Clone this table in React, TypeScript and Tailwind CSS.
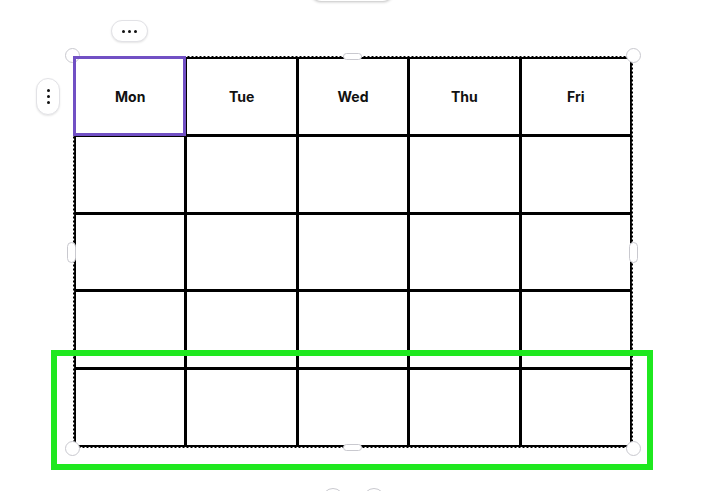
import React from "react";

const days = ["Mon", "Tue", "Wed", "Thu", "Fri"];

function Handle({ className }: { className: string }) {
  return <div className={"absolute z-20 bg-white border border-[#c9c9cf] " + className} />;
}

function Dots({ vertical }: { vertical?: boolean }) {
  return (
    <div className={"flex items-center justify-center gap-[3px] " + (vertical ? "flex-col" : "flex-row")}>
      <span className="w-[3px] h-[3px] rounded-full bg-[#111]" />
      <span className="w-[3px] h-[3px] rounded-full bg-[#111]" />
      <span className="w-[3px] h-[3px] rounded-full bg-[#111]" />
    </div>
  );
}

export default function App() {
  const cells = Array.from({ length: 20 });
  return (
    <div
      className="relative w-[703px] h-[491px] bg-white overflow-hidden"
      style={{ fontFamily: "Inter, 'Noto Sans', sans-serif" }}
    >
      {/* top partial tab */}
      <div className="absolute left-[310px] top-[-22px] w-[84px] h-[23px] rounded-full bg-white shadow-[0_1px_3px_rgba(0,0,0,0.25)]" />

      {/* more button */}
      <div className="absolute left-[111px] top-[20px] w-[37px] h-[22px] rounded-full bg-white border border-[#e2e2e6] shadow-[0_1px_2px_rgba(0,0,0,0.1)] flex items-center justify-center">
        <Dots />
      </div>

      {/* vertical menu button */}
      <div className="absolute left-[36px] top-[78px] w-[24px] h-[37px] rounded-full bg-white border border-[#e2e2e6] shadow-[0_1px_2px_rgba(0,0,0,0.1)] flex items-center justify-center">
        <Dots vertical />
      </div>

      {/* table */}
      <div className="pl-[73px] pt-[56px]">
        <div className="relative w-[560px] h-[392px]">
          <div className="grid grid-cols-5 grid-rows-5 w-full h-full border-l-[3px] border-t-[3px] border-black">
            {days.map((d, i) => (
              <div
                key={d}
                className="relative flex items-center justify-center border-r-[3px] border-b-[3px] border-black text-[14px] font-bold text-[#111]"
              >
                {i === 0 && (
                  <div className="absolute z-30 left-[-3px] top-[-3px] right-[-2px] bottom-[-2px] border-[3px] border-[#7150c4]" />
                )}
                <span className="relative">{d}</span>
              </div>
            ))}
            {cells.map((_, i) => (
              <div key={i} className="border-r-[3px] border-b-[3px] border-black" />
            ))}
          </div>

          {/* dashed selection outline */}
          <svg className="absolute z-10 left-[-1px] top-[-1px] w-[562px] h-[394px] pointer-events-none" viewBox="0 0 562 394">
            <rect x="1.5" y="1.5" width="559" height="391" fill="none" stroke="#ffffff" strokeWidth="1.2" strokeDasharray="2 2" />
          </svg>

          {/* handles */}
          <Handle className="left-[-8px] top-[-8px] w-[15px] h-[15px] rounded-full" />
          <Handle className="right-[-8px] top-[-8px] w-[15px] h-[15px] rounded-full" />
          <Handle className="left-[-8px] bottom-[-8px] w-[15px] h-[15px] rounded-full" />
          <Handle className="right-[-8px] bottom-[-8px] w-[15px] h-[15px] rounded-full" />
          <Handle className="left-[270px] top-[-3px] w-[19px] h-[7px] rounded-full" />
          <Handle className="left-[270px] bottom-[-3px] w-[19px] h-[7px] rounded-full" />
          <Handle className="left-[-6px] top-[186px] w-[9px] h-[21px] rounded-full" />
          <Handle className="right-[-5px] top-[186px] w-[9px] h-[21px] rounded-full" />
        </div>
      </div>

      {/* green highlight box */}
      <div className="absolute z-30 left-[51px] top-[350px] w-[602px] h-[120px] border-[6px] border-[#1fe81f]" />

      {/* bottom partial circles */}
      <div className="absolute left-[322px] top-[488px] flex gap-[19px]">
        <div className="w-[22px] h-[22px] rounded-full bg-white border border-[#c9c9cf]" />
        <div className="w-[22px] h-[22px] rounded-full bg-white border border-[#c9c9cf]" />
      </div>
    </div>
  );
}
